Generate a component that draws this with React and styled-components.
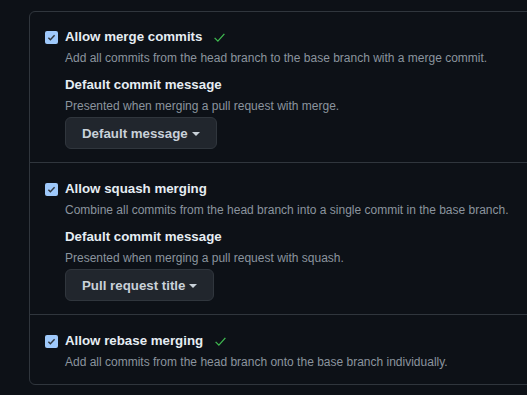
import React from 'react'
import styled, { createGlobalStyle } from 'styled-components'

const Global = createGlobalStyle`
  html, body {
    margin: 0;
    background: #0d1117;
    font-family: "Liberation Sans", Arial, sans-serif;
    color: #c9d1d9;
  }
`

const Page = styled.div`
  padding: 11px 0 0 29px;
  height: 395px;
  box-sizing: border-box;
  overflow: hidden;
`

const Box = styled.div`
  width: 540px;
  border: 1px solid #30363d;
  border-radius: 6px;
`

const Section = styled.div`
  padding: ${p => (p.first ? '15px' : '16px')} 16px 13px 15px;
  border-top: ${p => (p.first ? 'none' : '1px solid #30363d')};
`

const Row = styled.div`
  display: flex;
  align-items: flex-start;
  gap: 7px;
`

const Check = styled.span`
  flex: none;
  width: 13px;
  height: 13px;
  margin-top: 4px;
  border-radius: 2px;
  background: #9fc9fb;
  display: flex;
  align-items: center;
  justify-content: center;
`

const Body = styled.div`
  display: flex;
  flex-direction: column;
`

const Title = styled.div`
  font-size: 13.3px;
  font-weight: 700;
  line-height: 20px;
  color: #e6edf3;
  display: flex;
  align-items: center;
  gap: 11px;
`

const Note = styled.div`
  margin-top: 2px;
  font-size: 12px;
  line-height: 18px;
  color: #8b949e;
`

const Sub = styled.div`
  margin-top: 8px;
  display: flex;
  flex-direction: column;
  align-items: flex-start;
`

const Button = styled.button`
  margin-top: 2px;
  height: 32px;
  padding: 0 16px;
  display: inline-flex;
  align-items: center;
  gap: 4px;
  background: #21262d;
  border: 1px solid #30363d;
  border-radius: 6px;
  color: #c9d1d9;
  font-family: inherit;
  font-size: 13.3px;
  font-weight: 700;
`

const Caret = styled.span`
  width: 0;
  height: 0;
  border-left: 4px solid transparent;
  border-right: 4px solid transparent;
  border-top: 4px solid #c9d1d9;
  margin-top: 1px;
`

const Tick = () => (
  <svg width="9" height="9" viewBox="0 0 16 16">
    <path d="M2.5 8.5l3.5 3.5 7.5-8" fill="none" stroke="#30363d" strokeWidth="2.6" />
  </svg>
)

const Green = () => (
  <svg width="13" height="13" viewBox="0 0 16 16">
    <path d="M2 8.5l4 4 8-9" fill="none" stroke="#3fb950" strokeWidth="1.6" />
  </svg>
)

const Option = ({ title, note, ok, message, button, first }) => (
  <Section first={first}>
    <Row>
      <Check><Tick /></Check>
      <Body>
        <Title>{title}{ok && <Green />}</Title>
        <Note>{note}</Note>
        {button && (
          <Sub>
            <Title>Default commit message</Title>
            <Note>{message}</Note>
            <Button>{button}<Caret /></Button>
          </Sub>
        )}
      </Body>
    </Row>
  </Section>
)

export default function App() {
  return (
    <Page>
      <Global />
      <Box>
        <Option
          first
          ok
          title="Allow merge commits"
          note="Add all commits from the head branch to the base branch with a merge commit."
          message="Presented when merging a pull request with merge."
          button="Default message"
        />
        <Option
          title="Allow squash merging"
          note="Combine all commits from the head branch into a single commit in the base branch."
          message="Presented when merging a pull request with squash."
          button="Pull request title"
        />
        <Option
          ok
          title="Allow rebase merging"
          note="Add all commits from the head branch onto the base branch individually."
        />
      </Box>
    </Page>
  )
}
